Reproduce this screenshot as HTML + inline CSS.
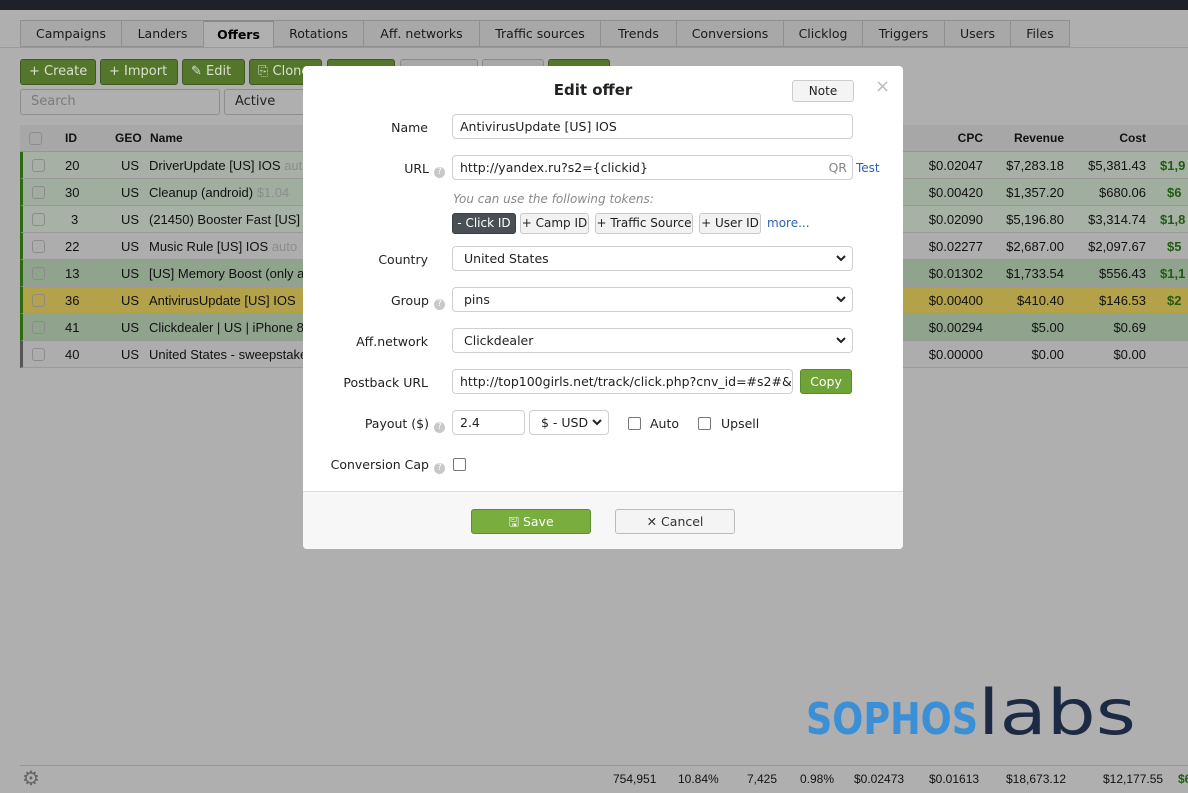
<!DOCTYPE html>
<html><head><meta charset="utf-8"><style>
*{box-sizing:border-box}
body{margin:0;width:1188px;height:793px;overflow:hidden;background:#afafaf;font-family:"Liberation Sans",sans-serif;font-size:13px;color:#111;position:relative}
.abs{position:absolute}
.top{left:0;top:0;width:1188px;height:10px;background:#1e2228}
.tab{position:absolute;top:20px;height:27px;border:1px solid #8f8f8f;border-right:none;background:#a8a8a8;text-align:center;line-height:26px;color:#1a1a1a;font-family:"DejaVu Sans",sans-serif;font-size:12.5px;white-space:nowrap}
.tab.on{background:#b0b0b0;border-top:2px solid #888;color:#000;font-weight:bold;height:28px}
.tab.last{border-right:1px solid #8f8f8f}
.btn{top:59px;height:26px;border-radius:3px;line-height:24px;font-size:13px;font-family:"DejaVu Sans",sans-serif;white-space:nowrap;overflow:hidden}
.g{background:#54762b;border:1px solid #3e5a1e;color:#d8e0cf;padding:0 8px}
.w{background:#a8a8a8;border:1px solid #8a8a8a}
.inp{top:89px;height:26px;border:1px solid #8e8e8e;border-radius:3px;background:#afafaf;line-height:24px;padding-left:10px;color:#222;font-family:"DejaVu Sans",sans-serif}
.th{left:20px;top:125px;width:1168px;height:27px;background:#a7a7a7;border-bottom:1px solid #959595}
.row{left:20px;width:1168px;height:27px;border-bottom:1px solid #9a9a9a;line-height:27px}
.row span,.th span{position:absolute}
.r{text-align:right;width:100px}
.cb{width:13px;height:13px;border:1px solid #8c8c8c;border-radius:3px;top:7px;left:9px}
.modal{left:303px;top:66px;width:600px;height:483px;background:#fff;border-radius:4px;font-family:"DejaVu Sans","Liberation Sans",sans-serif;font-size:12.5px;color:#222}
.lbl{left:0;width:125px;text-align:right;white-space:nowrap}
.q{display:inline-block;width:11px;height:11px;border-radius:50%;background:#c8c8c8;color:#fff;font-size:9px;line-height:11px;text-align:center;margin-left:5px;vertical-align:-1px}
.f{left:149px;height:25px;border:1px solid #cfcfcf;border-radius:4px;padding-left:7px;line-height:23px;white-space:nowrap;overflow:hidden}
.sel svg{position:absolute;right:6px;top:8px}
.tok{top:147px;height:21px;border:1px solid #c9c9c9;border-radius:3px;background:#f2f2f2;line-height:19px;text-align:center;font-size:12px;white-space:nowrap}
.chk{width:13px;height:13px;border:1px solid #777;border-radius:2px}
</style></head><body>
<div class="abs top"></div>
<div class="tab" style="left:20px;width:101px">Campaigns</div>
<div class="tab" style="left:121px;width:82px">Landers</div>
<div class="tab on" style="left:203px;width:70px">Offers</div>
<div class="tab" style="left:273px;width:90px">Rotations</div>
<div class="tab" style="left:363px;width:116px">Aff. networks</div>
<div class="tab" style="left:479px;width:121px">Traffic sources</div>
<div class="tab" style="left:600px;width:76px">Trends</div>
<div class="tab" style="left:676px;width:107px">Conversions</div>
<div class="tab" style="left:783px;width:79px">Clicklog</div>
<div class="tab" style="left:862px;width:82px">Triggers</div>
<div class="tab" style="left:944px;width:66px">Users</div>
<div class="tab last" style="left:1010px;width:60px">Files</div>
<div class="abs" style="left:0;top:47px;width:1188px;height:1px;background:#999"></div>

<div class="abs btn g" style="left:20px;width:76px">+ Create</div>
<div class="abs btn g" style="left:100px;width:78px">+ Import</div>
<div class="abs btn g" style="left:182px;width:63px">✎ Edit</div>
<div class="abs btn g" style="left:249px;width:73px">⎘ Clone</div>
<div class="abs btn g" style="left:327px;width:68px"></div>
<div class="abs btn w" style="left:400px;width:78px"></div>
<div class="abs btn w" style="left:482px;width:62px"></div>
<div class="abs btn g" style="left:548px;width:62px"></div>
<div class="abs inp" style="left:20px;width:200px;color:#7a7a7a">Search</div>
<div class="abs inp" style="left:224px;width:90px">Active</div>

<div class="abs th"><div class="abs cb"></div>
<span style="left:45px;line-height:27px;font-weight:bold;font-size:12px">ID</span>
<span style="left:95px;line-height:27px;font-weight:bold;font-size:12px">GEO</span>
<span style="left:130px;line-height:27px;font-weight:bold;font-size:12px">Name</span>
<span class="r" style="left:863px;line-height:27px;font-weight:bold;font-size:12px">CPC</span>
<span class="r" style="left:944px;line-height:27px;font-weight:bold;font-size:12px">Revenue</span>
<span class="r" style="left:1026px;line-height:27px;font-weight:bold;font-size:12px">Cost</span>
</div>

<div class="abs row" style="top:152px;background:#a6b0a4;border-left:3px solid #2c6a10"><div class="abs cb"></div><span style="left:42px">20</span><span style="left:98px">US</span><span style="left:126px">DriverUpdate [US] IOS <span style="position:static;color:#8d8d8d">aut</span></span><span class="r" style="left:860px">$0.02047</span><span class="r" style="left:941px">$7,283.18</span><span class="r" style="left:1023px">$5,381.43</span><span style="left:1137px;color:#215c10;font-weight:bold">$1,9</span></div>
<div class="abs row" style="top:179px;background:#a0ae9f;border-left:3px solid #2c6a10"><div class="abs cb"></div><span style="left:42px">30</span><span style="left:98px">US</span><span style="left:126px">Cleanup (android) <span style="position:static;color:#8d8d8d">$1.04</span></span><span class="r" style="left:860px">$0.00420</span><span class="r" style="left:941px">$1,357.20</span><span class="r" style="left:1023px">$680.06</span><span style="left:1144px;color:#215c10;font-weight:bold">$6</span></div>
<div class="abs row" style="top:206px;background:#a8b1a6;border-left:3px solid #2c6a10"><div class="abs cb"></div><span style="left:48px">3</span><span style="left:98px">US</span><span style="left:126px">(21450) Booster Fast [US]</span><span class="r" style="left:860px">$0.02090</span><span class="r" style="left:941px">$5,196.80</span><span class="r" style="left:1023px">$3,314.74</span><span style="left:1137px;color:#215c10;font-weight:bold">$1,8</span></div>
<div class="abs row" style="top:233px;background:#adadad;border-left:3px solid #2c6a10"><div class="abs cb"></div><span style="left:42px">22</span><span style="left:98px">US</span><span style="left:126px">Music Rule [US] IOS <span style="position:static;color:#8d8d8d">auto</span></span><span class="r" style="left:860px">$0.02277</span><span class="r" style="left:941px">$2,687.00</span><span class="r" style="left:1023px">$2,097.67</span><span style="left:1144px;color:#215c10;font-weight:bold">$5</span></div>
<div class="abs row" style="top:260px;background:#8fa38d;border-left:3px solid #2c6a10"><div class="abs cb"></div><span style="left:42px">13</span><span style="left:98px">US</span><span style="left:126px">[US] Memory Boost (only a</span><span class="r" style="left:860px">$0.01302</span><span class="r" style="left:941px">$1,733.54</span><span class="r" style="left:1023px">$556.43</span><span style="left:1137px;color:#215c10;font-weight:bold">$1,1</span></div>
<div class="abs row" style="top:287px;background:#b3a24a;border-left:3px solid #2c6a10"><div class="abs cb"></div><span style="left:42px">36</span><span style="left:98px">US</span><span style="left:126px">AntivirusUpdate [US] IOS</span><span class="r" style="left:860px">$0.00400</span><span class="r" style="left:941px">$410.40</span><span class="r" style="left:1023px">$146.53</span><span style="left:1144px;color:#215c10;font-weight:bold">$2</span></div>
<div class="abs row" style="top:314px;background:#8fa38d;border-left:3px solid #2c6a10"><div class="abs cb"></div><span style="left:42px">41</span><span style="left:98px">US</span><span style="left:126px">Clickdealer | US | iPhone 8</span><span class="r" style="left:860px">$0.00294</span><span class="r" style="left:941px">$5.00</span><span class="r" style="left:1023px">$0.69</span></div>
<div class="abs row" style="top:341px;background:#adadad;border-left:3px solid #555"><div class="abs cb"></div><span style="left:42px">40</span><span style="left:98px">US</span><span style="left:126px">United States - sweepstake</span><span class="r" style="left:860px">$0.00000</span><span class="r" style="left:941px">$0.00</span><span class="r" style="left:1023px">$0.00</span></div>

<svg class="abs" style="left:800px;top:676px" width="345" height="64">
<text x="6" y="58" textLength="172" lengthAdjust="spacingAndGlyphs" font-family="DejaVu Sans" font-weight="bold" font-size="44" fill="#3a8fd6">SOPHOS</text>
<text x="178" y="58" textLength="158" lengthAdjust="spacingAndGlyphs" font-family="DejaVu Sans" font-size="62" fill="#1d2a44">labs</text>
</svg>

<div class="abs" style="left:20px;top:765px;width:1168px;height:26px;border-top:1px solid #969696;font-size:12px;line-height:26px">
<span class="abs" style="left:2px;top:0;font-size:20px;color:#666">⚙</span>
<span class="abs" style="left:593px">754,951</span><span class="abs" style="left:658px">10.84%</span><span class="abs" style="left:727px">7,425</span><span class="abs" style="left:780px">0.98%</span><span class="abs" style="left:834px">$0.02473</span><span class="abs" style="left:909px">$0.01613</span><span class="abs" style="left:986px">$18,673.12</span><span class="abs" style="left:1083px">$12,177.55</span><span class="abs" style="left:1158px;color:#215c10;font-weight:bold">$6,4</span></div>

<div class="abs modal">
<div class="abs" style="left:0;width:580px;top:15px;text-align:center;font-size:15px;font-weight:bold">Edit offer</div>
<div class="abs" style="left:489px;top:14px;width:62px;height:22px;border:1px solid #ccc;border-radius:3px;background:#f4f4f4;text-align:center;line-height:20px;font-size:12px">Note</div>
<div class="abs" style="left:572px;top:10px;font-size:18px;color:#bbb">×</div>

<div class="abs lbl" style="top:54px">Name</div>
<div class="abs f" style="top:48px;width:401px">AntivirusUpdate [US] IOS</div>
<div class="abs lbl" style="top:95px;width:142px">URL<span class="q">?</span></div>
<div class="abs f" style="top:89px;width:401px">http://yandex.ru?s2={clickid}<span style="position:absolute;right:5px;color:#888">QR</span></div>
<div class="abs" style="left:553px;top:95px;color:#2a62b8;font-size:12px">Test</div>
<div class="abs" style="left:150px;top:126px;color:#888;font-style:italic;font-size:12px">You can use the following tokens:</div>
<div class="abs tok" style="left:149px;width:64px;background:#4a4f56;color:#fff;border-color:#3a3e44">- Click ID</div>
<div class="abs tok" style="left:217px;width:69px">+ Camp ID</div>
<div class="abs tok" style="left:292px;width:98px">+ Traffic Source</div>
<div class="abs tok" style="left:396px;width:62px">+ User ID</div>
<div class="abs" style="left:464px;top:150px;color:#2a62b8;font-size:12px">more...</div>

<div class="abs lbl" style="top:186px">Country</div>
<div class="abs f sel" style="top:180px;width:401px;padding-left:11px">United States<svg width="10" height="7"><path d="M1 1l4 4 4-4" stroke="#222" stroke-width="2" fill="none"/></svg></div>
<div class="abs lbl" style="top:227px;width:142px">Group<span class="q">?</span></div>
<div class="abs f sel" style="top:221px;width:401px;padding-left:11px">pins<svg width="10" height="7"><path d="M1 1l4 4 4-4" stroke="#222" stroke-width="2" fill="none"/></svg></div>
<div class="abs lbl" style="top:268px">Aff.network</div>
<div class="abs f sel" style="top:262px;width:401px;padding-left:11px">Clickdealer<svg width="10" height="7"><path d="M1 1l4 4 4-4" stroke="#222" stroke-width="2" fill="none"/></svg></div>
<div class="abs lbl" style="top:309px">Postback URL</div>
<div class="abs f" style="top:303px;width:341px">http://top100girls.net/track/click.php?cnv_id=#s2#&amp;pay</div>
<div class="abs" style="left:497px;top:303px;width:52px;height:25px;background:#6fa338;border:1px solid #5a8a2a;border-radius:3px;color:#fff;text-align:center;line-height:23px">Copy</div>
<div class="abs lbl" style="top:350px;width:142px">Payout ($)<span class="q">?</span></div>
<div class="abs f" style="top:344px;width:73px">2.4</div>
<div class="abs f sel" style="top:344px;left:226px;width:80px;padding-left:11px">$ - USD<svg width="10" height="7"><path d="M1 1l4 4 4-4" stroke="#222" stroke-width="2" fill="none"/></svg></div>
<div class="abs chk" style="left:325px;top:351px"></div><div class="abs" style="left:347px;top:350px">Auto</div>
<div class="abs chk" style="left:395px;top:351px"></div><div class="abs" style="left:418px;top:350px">Upsell</div>
<div class="abs lbl" style="top:391px;width:142px">Conversion Cap<span class="q">?</span></div>
<div class="abs chk" style="left:150px;top:392px"></div>

<div class="abs" style="left:0;top:425px;width:600px;height:58px;background:#f7f7f7;border-top:1px solid #ddd;border-radius:0 0 4px 4px"></div>
<div class="abs" style="left:168px;top:443px;width:120px;height:25px;background:#79ad3e;border:1px solid #5f8f2d;border-radius:3px;color:#fff;text-align:center;line-height:23px">🖫 Save</div>
<div class="abs" style="left:312px;top:443px;width:120px;height:25px;background:#f4f4f4;border:1px solid #bbb;border-radius:3px;color:#333;text-align:center;line-height:23px"><b>✕</b> Cancel</div>
</div>
</body></html>
